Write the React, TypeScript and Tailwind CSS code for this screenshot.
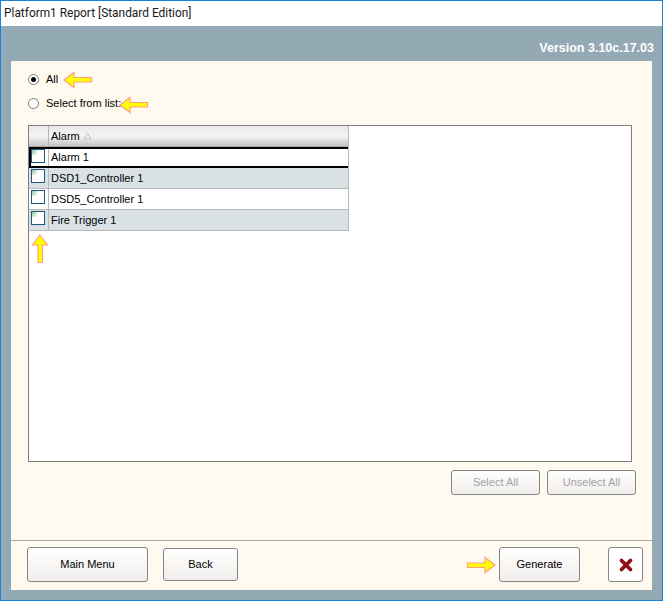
import { X } from 'lucide-react';

const rows = [
  { name: 'Alarm 1', shaded: false, focused: true },
  { name: 'DSD1_Controller 1', shaded: true, focused: false },
  { name: 'DSD5_Controller 1', shaded: false, focused: false },
  { name: 'Fire Trigger 1', shaded: true, focused: false },
];

const sans = 'font-["Liberation_Sans",sans-serif]';

function Arrow({ className, rotate = 0 }: { className: string; rotate?: number }) {
  return (
    <svg
      className={`absolute ${className}`}
      width="30"
      height="18"
      viewBox="0 0 30 18"
      style={{ transform: `rotate(${rotate}deg)` }}
    >
      <path
        d="M1 9 L11 1.5 L11 6.5 L28.5 6.5 L28.5 11 L11 11 L11 16.5 Z"
        fill="#ffff00"
        stroke="#ff9f80"
        strokeWidth="1.2"
      />
    </svg>
  );
}

function Radio({ checked, label }: { checked?: boolean; label: string }) {
  return (
    <div className="flex items-center h-3 gap-[7px]">
      <span className="w-[11px] h-[11px] rounded-full border border-[#7a7a7a] bg-white flex items-center justify-center">
        {checked && <span className="w-[5px] h-[5px] rounded-full bg-black" />}
      </span>
      <span className="text-[11px] text-black">{label}</span>
    </div>
  );
}

function Check() {
  return (
    <span className="relative block w-[14px] h-[14px] border border-[#1c5a7d] bg-white">
      <span className="absolute left-0 top-0 w-[5px] h-[5px] bg-gradient-to-br from-[#8fc7a0] to-white" />
    </span>
  );
}

function Btn({ label, className, disabled }: { label: string; className: string; disabled?: boolean }) {
  return (
    <button
      className={`rounded-[3px] border border-[#858585] bg-gradient-to-b from-white to-[#f0eeec] text-[11px] flex items-center justify-center ${disabled ? 'text-[#a3a3a3]' : 'text-black'} ${className}`}
    >
      {label}
    </button>
  );
}

export default function App() {
  return (
    <div className={`relative w-[663px] h-[601px] border border-[#1883d7] bg-[#93a9b4] flex flex-col overflow-hidden ${sans}`}>
      <div className="h-[25px] shrink-0 bg-white pl-[3px] pt-[4px] text-[11.9px] leading-[16px] text-[#1a1a1a] font-['Roboto',sans-serif]">
        Platform1 Report [Standard Edition]
      </div>
      <div className="h-[35px] shrink-0 flex items-center justify-end pr-[8px] pt-[10px] text-[12.5px] font-bold text-white">
        Version 3.10c.17.03
      </div>
      <div className="mx-[10px] h-[529px] bg-[#fffaf0] flex flex-col">
        <div className="flex flex-col gap-[12px] pl-[17px] pt-[12px]">
          <Radio checked label="All" />
          <Radio label="Select from list:" />
        </div>
        <div className="ml-[17px] mt-[16px] w-[604px] h-[337px] border border-[#808080] bg-white">
          <div className="w-[320px] border-r border-[#b9b9b9]">
            <div className="flex h-[21px] border-b border-[#a8a8a8] bg-gradient-to-b from-[#e9e9e9] via-[#f4f4f4] to-[#c6c6c6] text-[11px]">
              <div className="w-[20px] border-r border-[#b5b5b5]" />
              <div className="flex-1 flex items-center pl-[2px] gap-[3px] text-black">
                Alarm
                <svg width="9" height="8" viewBox="0 0 9 8"><path d="M4.5 1 L8 7 L1 7 Z" fill="none" stroke="#c4c4c4" /></svg>
              </div>
            </div>
            {rows.map((row) => (
              <div
                key={row.name}
                className={`flex h-[21px] text-[11px] text-black ${row.shaded ? 'bg-[#d9e1e5]' : 'bg-white'} ${row.focused ? 'border-y-2 border-l-2 border-black' : 'border-b border-[#b9b9b9]'}`}
              >
                <div className={`flex items-start border-r border-[#b9b9b9] ${row.focused ? 'w-[18px]' : 'w-[20px] pl-[2px] pt-[1px]'}`}>
                  <Check />
                </div>
                <div className="flex-1 flex items-center pl-[2px]">{row.name}</div>
              </div>
            ))}
          </div>
        </div>
        <div className="flex justify-end gap-[7px] mt-[8px] pr-[16px]">
          <Btn label="Select All" disabled className="w-[89px] h-[25px]" />
          <Btn label="Unselect All" disabled className="w-[89px] h-[25px]" />
        </div>
        <div className="mt-[45px] border-t border-[#a9a9a9] flex items-center h-[49px] pl-[16px] pr-[9px] pb-[1px]">
          <Btn label="Main Menu" className="w-[121px] h-[35px]" />
          <Btn label="Back" className="w-[75px] h-[33px] ml-[15px]" />
          <Btn label="Generate" className="w-[81px] h-[35px] ml-auto" />
          <button className="ml-[28px] w-[35px] h-[35px] rounded-[3px] border border-[#858585] bg-white flex items-center justify-center">
            <X size={18} strokeWidth={5} color="#8b0f14" />
          </button>
        </div>
      </div>
      <Arrow className="left-[62px] top-[70px]" />
      <Arrow className="left-[118px] top-[95px]" />
      <Arrow className="left-[24px] top-[239px]" rotate={90} />
      <Arrow className="left-[465px] top-[555px]" rotate={180} />
    </div>
  );
}
